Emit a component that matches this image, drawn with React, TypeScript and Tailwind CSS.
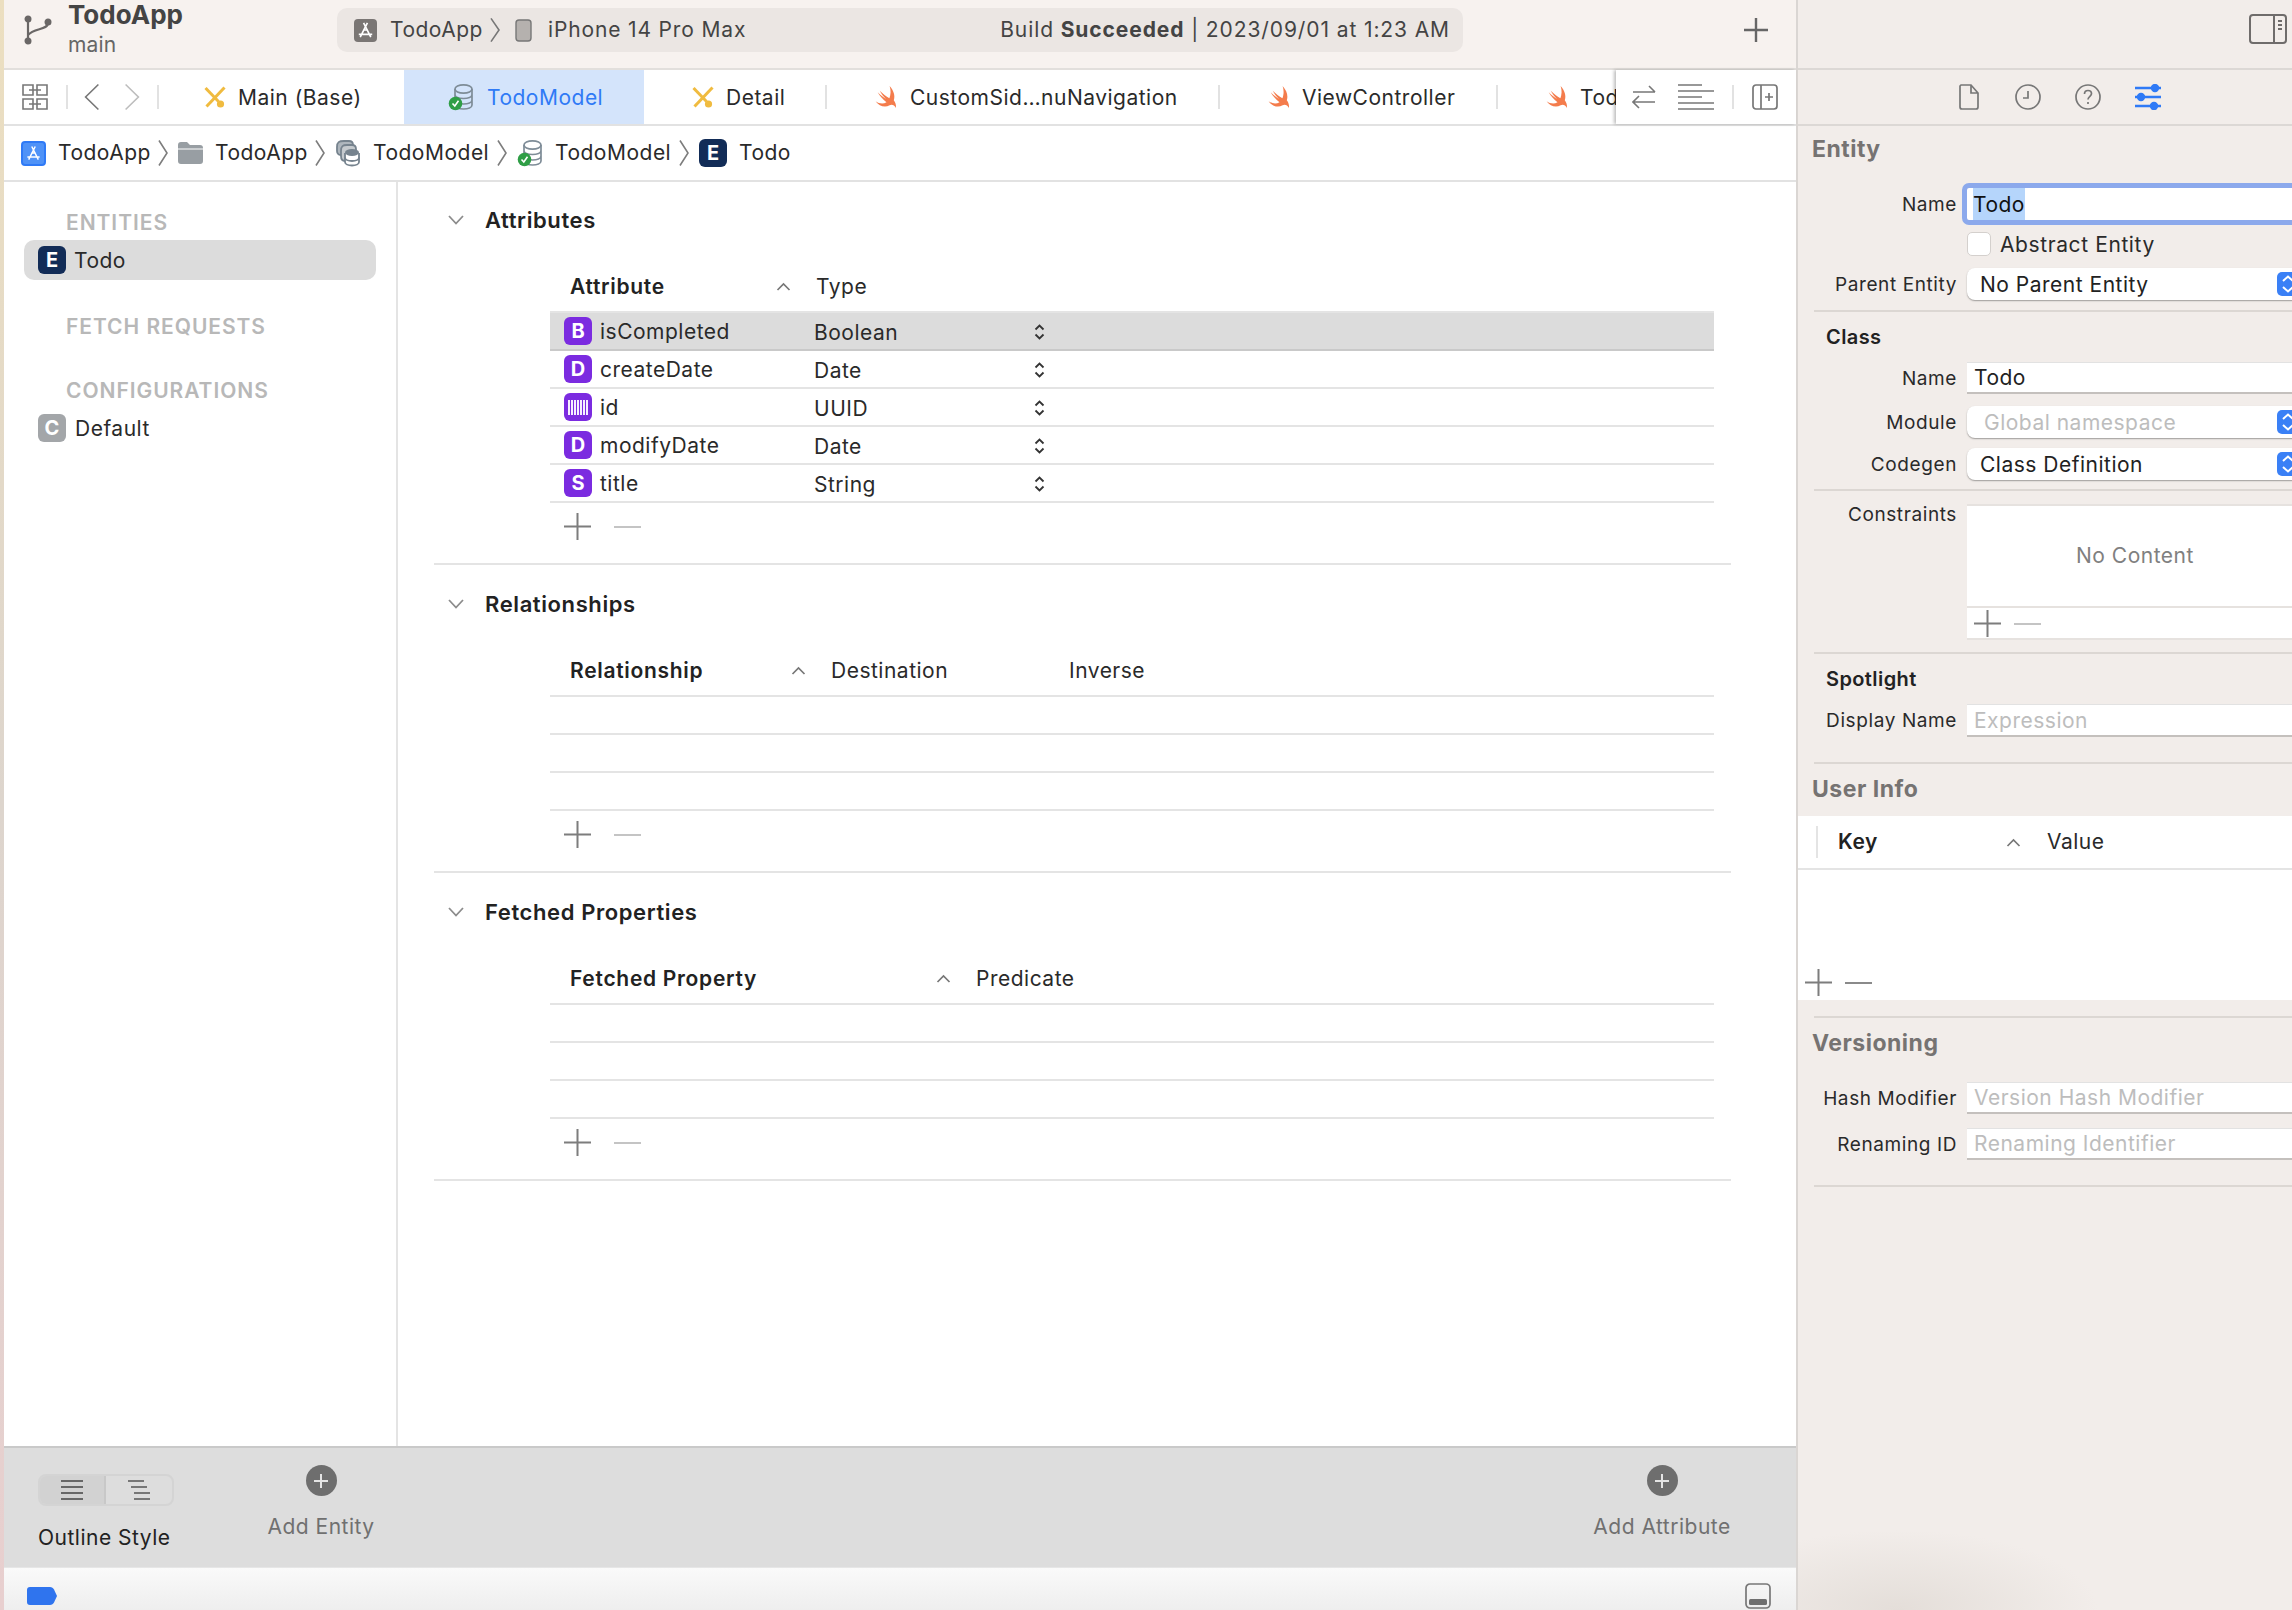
import type { ReactNode } from "react";

const LINE = "border-[#e4e4e4]";

function Chevron({ dir = "right", className = "" }: { dir?: "left" | "right"; className?: string }) {
  return (
    <svg viewBox="0 0 10 28" preserveAspectRatio="none" fill="none" className={className} stroke="currentColor" strokeWidth="1.6">
      <path vectorEffect="non-scaling-stroke" d={dir === "right" ? "M1 1.5 L9 14 L1 26.5" : "M9 1.5 L1 14 L9 26.5"} />
    </svg>
  );
}

function SortUp({ className = "" }: { className?: string }) {
  return (
    <svg viewBox="0 0 15 9" fill="none" stroke="#777" strokeWidth="1.7" className={`h-[9px] w-[15px] shrink-0 ${className}`}>
      <path d="M1.5 8 L7.5 2 L13.5 8" />
    </svg>
  );
}

function Stepper({ className = "" }: { className?: string }) {
  return (
    <svg viewBox="0 0 11 16" fill="none" stroke="#333" strokeWidth="1.8" className={`h-[16px] w-[11px] ${className}`}>
      <path d="M1.5 5.5 L5.5 1.5 L9.5 5.5 M1.5 10.5 L5.5 14.5 L9.5 10.5" />
    </svg>
  );
}

function PlusMinus({ dark = false, gap = "gap-[23px]" }: { dark?: boolean; gap?: string }) {
  return (
    <div className={`flex items-center ${gap}`}>
      <svg viewBox="0 0 27 27" stroke="#7d7d7d" strokeWidth="2" className="h-[27px] w-[27px]">
        <path d="M13.5 0 V27 M0 13.5 H27" />
      </svg>
      <div className={`h-[2px] w-[27px] ${dark ? "bg-[#8a8a8a]" : "bg-[#c4c4c4]"}`} />
    </div>
  );
}

function BranchIcon() {
  return (
    <svg viewBox="0 0 28 30" fill="none" stroke="#6a6766" strokeWidth="2.2" className="h-[30px] w-[28px]">
      <circle cx="4" cy="4" r="2.4" fill="#6a6766" />
      <circle cx="4" cy="26" r="2.4" fill="#6a6766" />
      <circle cx="24" cy="7" r="2.4" fill="#6a6766" />
      <path d="M4 5 V25 M24 8 C24 15 10 13 4 20" />
    </svg>
  );
}

function AppGlyph({ color = "#fff" }: { color?: string }) {
  return (
    <svg viewBox="0 0 24 24" fill="none" stroke={color} strokeWidth="1.7" className="h-full w-full">
      <path d="M14 4 L6.5 19 M10 4 L17.5 19 M5 16 H19 M9.5 11.5 H14.5" />
    </svg>
  );
}

function DbCheck({ className = "" }: { className?: string }) {
  return (
    <svg viewBox="0 0 26 28" fill="none" className={className}>
      <g stroke="#7e8c97" strokeWidth="1.7">
        <ellipse cx="15.5" cy="6" rx="8.5" ry="4.2" />
        <path d="M7 6 V22 C7 24.5 11 26 15.5 26 C20 26 24 24.5 24 22 V6 M7 11.5 C7 14 11 15.5 15.5 15.5 C20 15.5 24 14 24 11.5 M7 17 C7 19.5 11 21 15.5 21 C20 21 24 19.5 24 17" />
      </g>
      <circle cx="7.5" cy="20.5" r="6.8" fill="#2f9e46" />
      <path d="M4.5 20.5 L6.8 23 L10.5 17.8" stroke="#fff" strokeWidth="1.6" />
    </svg>
  );
}

function ModelStack() {
  return (
    <svg viewBox="0 0 26 28" fill="none" className="h-[28px] w-[26px]">
      <g stroke="#76838e" strokeWidth="1.8">
        <path d="M2 8 C2 3 4 2 9 2 H14 C17 2 18 3 18 6 V16 H6 C3 16 2 14 2 12 Z" fill="#aeb6bd" />
        <path d="M6 12 C6 7 8 6 12 6 H17 C20 6 21 7 21 10 V22 H10 C7 22 6 20 6 17 Z" fill="#c5cace" />
      </g>
      <path d="M10 14 V23 C10 25 13 26.5 17 26.5 C21 26.5 24 25 24 23 V14" fill="#fff" stroke="#76838e" strokeWidth="1.8" />
      <ellipse cx="17" cy="13.5" rx="7" ry="3.4" fill="#76838e" />
      <path d="M10 18.5 C10 20.5 13 22 17 22 C21 22 24 20.5 24 18.5" stroke="#76838e" strokeWidth="1.8" />
    </svg>
  );
}

function FolderIcon() {
  return (
    <svg viewBox="0 0 25 22" className="h-[22px] w-[25px]" fill="#989ea3">
      <path d="M0 3 C0 1 1 0 3 0 H9 L12 3 H22 C24 3 25 4 25 6 V19 C25 21 24 22 22 22 H3 C1 22 0 21 0 19 Z" />
      <path d="M0 7 H25" stroke="#fff" strokeWidth="1" />
    </svg>
  );
}

function StoryboardIcon() {
  return (
    <svg viewBox="0 0 22 22" fill="none" className="h-[22px] w-[22px]" stroke="#f0bb3f">
      <path d="M20.5 1.5 L2.5 20.5" strokeWidth="3" />
      <path d="M1.5 2 L14.5 15.5" strokeWidth="3" />
      <circle cx="16.5" cy="18" r="3.6" fill="#f0bb3f" stroke="none" />
    </svg>
  );
}

function SwiftIcon() {
  return (
    <svg viewBox="0 0 24 24" className="h-[26px] w-[25px]" fill="#f47c4c">
      <path d="M15 1.5 C19 6 20.5 11 19 15 C20.5 17 21.5 19.5 21 22.5 C19.5 19.5 17 19 15 20 C10.5 22.5 5 21 1.5 16 C5 18.5 9 18.8 12 17 C8.5 14.5 5.5 11 3.5 7.5 C6.5 10.5 9.5 12.5 11.5 13.8 C9 11.5 6.8 8.5 5.5 6 C8.5 9 12.5 12 14.8 13.2 C16 10 16.5 6 15 1.5 Z" />
    </svg>
  );
}

function Badge({ letter, bg = "bg-[#7b2be0]" }: { letter?: string; bg?: string }) {
  return (
    <div className={`flex h-[28px] w-[28px] shrink-0 items-center justify-center rounded-[6px] text-[20px] font-bold tracking-normal text-white ${bg}`}>
      {letter ?? (
        <svg viewBox="0 0 20 15" className="h-[15px] w-[20px]" fill="#f6efff" shapeRendering="crispEdges">
          {[1, 4, 7, 10, 13, 16, 19].map((x) => (
            <rect key={x} x={x - 1} y="0" width="2" height="15" />
          ))}
        </svg>
      )}
    </div>
  );
}

function Sep() {
  return <div className="h-[24px] w-[2px] shrink-0 bg-[#e2e2e2]" />;
}

function Tab({
  icon,
  label,
  width,
  pad,
  gap = "ml-[13px]",
  active,
}: {
  icon: ReactNode;
  label: string;
  width: string;
  pad: string;
  gap?: string;
  active?: boolean;
}) {
  return (
    <div className={`flex h-full shrink-0 items-center ${width} ${pad} ${active ? "bg-[#d4e4fb] text-[#2f7af6]" : ""}`}>
      {icon}
      <span className={`whitespace-nowrap pt-[1px] ${gap}`}>{label}</span>
    </div>
  );
}

function Crumb({ icon, label, width, last }: { icon: ReactNode; label: string; width: string; last?: boolean }) {
  return (
    <>
      {icon}
      <span className={`ml-[12px] whitespace-nowrap ${width}`}>{label}</span>
      {!last && <Chevron className="mr-[10px] h-[28px] w-[10px] text-[#7d7d7d]" />}
    </>
  );
}

type Col = { label: string; width: string };

function Section({
  title,
  first,
  sortWidth,
  cols,
  top = "pt-[18px]",
  children,
}: {
  title: string;
  first: string;
  sortWidth: string;
  cols: Col[];
  top?: string;
  children: ReactNode;
}) {
  return (
    <section className={top}>
      <div className="ml-[50px] flex h-[40px] items-center">
        <svg viewBox="0 0 16 10" fill="none" stroke="#8c8c8c" strokeWidth="1.8" className="h-[10px] w-[16px]">
          <path d="M1 1 L8 8.5 L15 1" />
        </svg>
        <h2 className="ml-[21px] text-[22px] font-semibold tracking-[0.6px] text-[#222]">{title}</h2>
      </div>
      <div className="ml-[152px] w-[1164px]">
        <div className={`flex h-[73px] items-center border-b-2 pl-[20px] pt-[22px] ${LINE}`}>
          <span className={`font-semibold tracking-[0.7px] text-[#222] ${sortWidth}`}>{first}</span>
          <SortUp className="mr-[25px]" />
          {cols.map((c) => (
            <span key={c.label} className={`text-[#2a2a2a] ${c.width}`}>
              {c.label}
            </span>
          ))}
        </div>
        {children}
        <div className="ml-[14px] pt-[10px]">
          <PlusMinus />
        </div>
      </div>
      <div className={`ml-[36px] mt-[23px] h-0 w-[1297px] border-b-2 ${LINE}`} />
    </section>
  );
}

const attributes = [
  { badge: "B", name: "isCompleted", type: "Boolean" },
  { badge: "D", name: "createDate", type: "Date" },
  { badge: undefined, name: "id", type: "UUID" },
  { badge: "D", name: "modifyDate", type: "Date" },
  { badge: "S", name: "title", type: "String" },
];

function EmptyRows() {
  return (
    <>
      {[0, 1, 2].map((i) => (
        <div key={i} className={`h-[38px] border-b-2 ${LINE}`} />
      ))}
    </>
  );
}

function FieldRow({
  label,
  children,
  className = "",
  labelClass = "pt-[2px]",
}: {
  label: string;
  children: ReactNode;
  className?: string;
  labelClass?: string;
}) {
  return (
    <div className={`flex ${className}`}>
      <div className={`w-[159px] shrink-0 whitespace-nowrap text-right text-[19px] tracking-[0.6px] text-[#2a2a2a] ${labelClass}`}>{label}</div>
      <div className="ml-[10px] w-[340px] shrink-0">{children}</div>
    </div>
  );
}

function TextField({ value, placeholder, h = "h-[32px]" }: { value?: string; placeholder?: string; h?: string }) {
  return (
    <div
      className={`flex items-center border-t border-t-[#e2e2e2] border-b-2 border-b-[#c4c0bd] bg-white pl-[7px] pt-[1px] ${h} ${
        value ? "text-[#222]" : "text-[#bdbdbd]"
      }`}
    >
      {value ?? placeholder}
    </div>
  );
}

function SelectField({ value, muted }: { value: string; muted?: boolean }) {
  return (
    <div className="flex h-[32px] items-center rounded-[8px] bg-white pl-[13px] pr-[6px] shadow-[0_1px_1.5px_rgba(0,0,0,0.35)]">
      <span className={`flex-1 pt-[2px] ${muted ? "pl-[4px] text-[#bdbdbd]" : "text-[#222]"}`}>{value}</span>
      <svg viewBox="0 0 24 24" className="h-[24px] w-[24px] rounded-[5px] bg-[#3a80f6]" fill="none" stroke="#fff" strokeWidth="2">
        <path d="M6 9 L11 4.5 L16 9 M6 15 L11 19.5 L16 15" />
      </svg>
    </div>
  );
}

function Divider({ className = "" }: { className?: string }) {
  return <div className={`ml-[16px] h-[2px] bg-[#dcd7d3] ${className}`} />;
}

function Heading({ children, className = "h-[50px]" }: { children: ReactNode; className?: string }) {
  return <div className={`ml-[14px] flex items-center text-[23px] font-bold tracking-[0.5px] text-[#767372] ${className}`}>{children}</div>;
}

function SubHeading({ children }: { children: ReactNode }) {
  return <div className="ml-[28px] flex h-[50px] items-center text-[20px] font-semibold tracking-[0.4px] text-[#222]">{children}</div>;
}

function Inspector() {
  return (
    <aside className="relative h-full flex-1 overflow-hidden bg-[#f2edea] bg-[radial-gradient(ellipse_200px_80px_at_100px_100%,#e4ded9,transparent)]">
      <div className="flex h-[70px] items-start justify-end border-b-2 border-[#dcd8d5] pr-[5px] pt-[14px]">
        <svg viewBox="0 0 38 30" fill="none" stroke="#6f6c6b" strokeWidth="2" className="h-[30px] w-[38px]">
          <rect x="1" y="1" width="36" height="28" rx="3" />
          <path d="M25 1 V29 M29 7 H33 M29 11 H33 M29 15 H33" />
        </svg>
      </div>
      <div className="flex h-[56px] items-center border-b-2 border-[#dcd8d5] pl-[161px]">
        <svg viewBox="0 0 20 26" fill="none" stroke="#777" strokeWidth="1.7" className="h-[26px] w-[20px]">
          <path d="M2 1 H12 L19 9 V23 C19 24.5 18 25 17 25 H3 C2 25 1 24.5 1 23 V2 Z M12 1 V9 H19" />
        </svg>
        <svg viewBox="0 0 26 26" fill="none" stroke="#777" strokeWidth="1.7" className="ml-[36px] h-[26px] w-[26px]">
          <circle cx="13" cy="13" r="12" />
          <path d="M13 7 V14 H8" />
        </svg>
        <svg viewBox="0 0 26 26" fill="none" stroke="#777" strokeWidth="1.7" className="ml-[34px] h-[26px] w-[26px]">
          <circle cx="13" cy="13" r="12" />
          <path d="M9.5 10 C9.5 7.5 11 6.5 13 6.5 C15.2 6.5 16.5 8 16.5 9.8 C16.5 12.2 13 12.5 13 15.5 M13 18 V20" />
        </svg>
        <svg viewBox="0 0 26 26" fill="none" stroke="#2f7af6" strokeWidth="2.4" className="ml-[34px] h-[26px] w-[26px]">
          <path d="M0 4 H26 M0 13 H26 M0 22 H26" />
          <circle cx="20" cy="4" r="3" fill="#2f7af6" />
          <circle cx="6" cy="13" r="3" fill="#2f7af6" />
          <circle cx="19" cy="22" r="3" fill="#2f7af6" />
        </svg>
      </div>

      <Heading className="h-[46px]">Entity</Heading>
      <FieldRow label="Name" className="mt-[16px] h-[32px] items-center">
        <div className="flex h-[32px] items-center rounded-[2px] bg-white pl-[6px] text-[#111] outline-[5px] outline-[#8ca9ec]">
          <span className="bg-[#b5d5fb] pt-[1px]">Todo</span>
        </div>
      </FieldRow>
      <div className="ml-[169px] mt-[12px] flex h-[24px] items-center">
        <div className="h-[24px] w-[24px] rounded-[5px] border border-[#d4d0cd] bg-white" />
        <span className="ml-[9px] pt-[1px] tracking-[0.6px] text-[#2a2a2a]">Abstract Entity</span>
      </div>
      <FieldRow label="Parent Entity" className="mt-[12px] h-[32px] items-center">
        <SelectField value="No Parent Entity" />
      </FieldRow>
      <Divider className="mt-[10px]" />

      <SubHeading>Class</SubHeading>
      <FieldRow label="Name" className="h-[32px] items-center">
        <TextField value="Todo" />
      </FieldRow>
      <FieldRow label="Module" className="mt-[12px] h-[32px] items-center">
        <SelectField value="Global namespace" muted />
      </FieldRow>
      <FieldRow label="Codegen" className="mt-[10px] h-[32px] items-center">
        <SelectField value="Class Definition" />
      </FieldRow>
      <Divider className="mt-[9px]" />

      <FieldRow label="Constraints" className="mt-[13px] items-start" labelClass="leading-[22px]">
        <div className="h-[136px] border-t-2 border-b-2 border-[#e6e2df] bg-white">
          <div className="flex h-[102px] items-center border-b-2 border-[#e6e2df] pl-[109px] text-[#808080]">No Content</div>
          <div className="pl-[7px] pt-[2px]">
            <PlusMinus gap="gap-[13px]" />
          </div>
        </div>
      </FieldRow>
      <Divider className="mt-[12px]" />

      <SubHeading>Spotlight</SubHeading>
      <FieldRow label="Display Name" className="h-[33px] items-center">
        <TextField placeholder="Expression" h="h-[33px]" />
      </FieldRow>
      <Divider className="mt-[25px]" />

      <Heading className="h-[52px] pb-[2px]">User Info</Heading>
      <div className="flex h-[184px] flex-col bg-white">
        <div className="flex h-[54px] shrink-0 items-center border-b-2 border-[#e4e4e4] pl-[18px]">
          <div className="h-[32px] w-[2px] bg-[#e4e4e4]" />
          <span className="ml-[20px] w-[168px] font-semibold text-[#222]">Key</span>
          <SortUp />
          <span className="ml-[26px] text-[#2a2a2a]">Value</span>
        </div>
        <div className="mt-auto pb-[4px] pl-[7px]">
          <PlusMinus dark gap="gap-[13px]" />
        </div>
      </div>
      <Divider className="mt-[16px]" />

      <Heading>Versioning</Heading>
      <FieldRow label="Hash Modifier" className="mt-[14px] h-[32px] items-center">
        <TextField placeholder="Version Hash Modifier" />
      </FieldRow>
      <FieldRow label="Renaming ID" className="mt-[14px] h-[32px] items-center">
        <TextField placeholder="Renaming Identifier" />
      </FieldRow>
      <Divider className="mt-[25px]" />
    </aside>
  );
}

function BarAction({ label, className = "" }: { label: string; className?: string }) {
  return (
    <div className={`flex w-[160px] flex-col items-center pt-[17px] ${className}`}>
      <div className="flex h-[31px] w-[31px] items-center justify-center rounded-full bg-[#6e6e6e]">
        <svg viewBox="0 0 16 16" stroke="#e4e4e4" strokeWidth="2" className="h-[16px] w-[16px]">
          <path d="M8 1 V15 M1 8 H15" />
        </svg>
      </div>
      <span className="mt-[15px] whitespace-nowrap text-[#707070]">{label}</span>
    </div>
  );
}

export default function App() {
  return (
    <div className="flex h-[1610px] w-[2292px] overflow-hidden bg-white font-['Inter',sans-serif] text-[21px] tracking-[0.5px] text-[#2a2a2a]">
      <div className="h-full w-[4px] shrink-0 bg-gradient-to-b from-[#ecdfc0] via-[#ddd5cd] to-[#e8cfcf]" />

      <div className="flex h-full w-[1794px] shrink-0 flex-col border-r-2 border-[#dad6d3]">
        {/* barre du haut */}
        <header className="flex h-[70px] shrink-0 items-center border-b-2 border-[#e2dfdc] bg-[#f7f2ef] pb-[8px]">
          <div className="ml-[20px]">
            <BranchIcon />
          </div>
          <div className="ml-[16px] -mt-[4px] flex w-[269px] flex-col leading-none">
            <span className="text-[26px] font-bold tracking-normal text-[#444]">TodoApp</span>
            <span className="mt-[6px] text-[21px] tracking-[0.2px] text-[#666]">main</span>
          </div>
          <div className="flex h-[44px] w-[1126px] items-center rounded-[10px] bg-[#ebe6e3] pl-[17px] pr-[13px] text-[#444]">
            <div className="h-[23px] w-[23px] rounded-[4px] bg-[#7a7674]">
              <AppGlyph />
            </div>
            <span className="ml-[13px] w-[100px]">TodoApp</span>
            <Chevron className="h-[26px] w-[10px] text-[#777]" />
            <svg viewBox="0 0 17 23" fill="#b5b1ae" stroke="#777" strokeWidth="1.4" className="ml-[15px] h-[23px] w-[17px]">
              <rect x="1" y="1" width="15" height="21" rx="3" />
            </svg>
            <span className="ml-[16px] tracking-[0.85px]">iPhone 14 Pro Max</span>
            <span className="ml-auto tracking-[0.9px]">
              Build <b className="font-bold">Succeeded</b> | 2023/09/01 at 1:23 AM
            </span>
          </div>
          <svg viewBox="0 0 24 24" stroke="#666" strokeWidth="2.4" className="ml-[281px] h-[24px] w-[24px]">
            <path d="M12 0 V24 M0 12 H24" />
          </svg>
        </header>

        {/* onglets */}
        <nav className="flex h-[56px] shrink-0 items-center border-b-2 border-[#e2e2e2]">
          <svg viewBox="0 0 26 26" fill="none" stroke="#777" strokeWidth="1.6" className="ml-[18px] h-[26px] w-[26px] shrink-0">
            <path d="M1 1 H11 V11 H1 Z M15 1 H25 V11 H15 Z M1 15 H11 V25 H1 Z M15 15 H25 V25 H15 Z M7 6 H19 M7 20 H19" />
          </svg>
          <div className="ml-[18px] shrink-0">
            <Sep />
          </div>
          <Chevron dir="left" className="ml-[16px] h-[28px] w-[16px] shrink-0 text-[#777]" />
          <Chevron className="ml-[24px] h-[28px] w-[16px] shrink-0 text-[#bdbdbd]" />
          <div className="ml-[17px] shrink-0">
            <Sep />
          </div>
          <div className="flex h-full min-w-0 flex-1 items-center overflow-hidden">
            <Tab icon={<StoryboardIcon />} label="Main (Base)" width="w-[245px]" pad="pl-[45px]" gap="ml-[12px]" />
            <Tab icon={<DbCheck className="h-[28px] w-[26px]" />} label="TodoModel" width="w-[240px]" pad="pl-[44px]" active />
            <Tab icon={<StoryboardIcon />} label="Detail" width="w-[181px]" pad="pl-[48px]" gap="ml-[12px]" />
            <Sep />
            <Tab icon={<SwiftIcon />} label="CustomSid…nuNavigation" width="w-[391px]" pad="pl-[47px]" gap="ml-[11px]" />
            <Sep />
            <Tab icon={<SwiftIcon />} label="ViewController" width="w-[276px]" pad="pl-[47px]" gap="ml-[10px]" />
            <Sep />
            <Tab icon={<SwiftIcon />} label="TodoItem" width="w-[200px]" pad="pl-[47px]" gap="ml-[10px]" />
          </div>
          <div className="relative flex h-full w-[180px] shrink-0 items-center bg-white pl-[16px] shadow-[-2px_0_3px_rgba(0,0,0,0.25)]">
            <svg viewBox="0 0 24 26" fill="none" stroke="#777" strokeWidth="1.6" className="h-[26px] w-[24px]">
              <path d="M1 8 H23 M17 2 L23 8 M23 18 H1 M7 12 L1 18 L7 24" />
            </svg>
            <svg viewBox="0 0 36 26" fill="none" stroke="#777" strokeWidth="1.7" className="ml-[22px] h-[26px] w-[36px]">
              <path d="M0 1 H24 M0 7 H36 M0 13 H24 M0 19 H36 M0 25 H36" />
            </svg>
            <div className="ml-[18px]">
              <Sep />
            </div>
            <svg viewBox="0 0 26 26" fill="none" stroke="#777" strokeWidth="1.7" className="ml-[18px] h-[26px] w-[26px]">
              <rect x="1" y="1" width="24" height="24" rx="3" />
              <path d="M9 1 V25 M17 9 V17 M13 13 H21" />
            </svg>
          </div>
        </nav>

        {/* fil d'ariane */}
        <div className="flex h-[56px] shrink-0 items-center border-b-2 border-[#e2e2e2] pl-[17px]">
          <Crumb
            icon={
              <div className="h-[25px] w-[25px] shrink-0 rounded-[4px] border-2 border-[#2f7af6] bg-[#4f92f7]">
                <AppGlyph />
              </div>
            }
            label="TodoApp"
            width="w-[100px]"
          />
          <Crumb icon={<FolderIcon />} label="TodoApp" width="w-[100px]" />
          <Crumb icon={<ModelStack />} label="TodoModel" width="w-[124px]" />
          <Crumb icon={<DbCheck className="h-[28px] w-[26px]" />} label="TodoModel" width="w-[124px]" />
          <Crumb icon={<Badge letter="E" bg="bg-[#122c57]" />} label="Todo" width="" last />
        </div>

        <div className="flex min-h-0 flex-1">
          {/* entités */}
          <div className="w-[394px] shrink-0 border-r-2 border-[#e4e4e4]">
            <div className="ml-[62px] mt-[28px] flex h-[24px] items-center pt-[2px] font-semibold tracking-[0.95px] text-[#b8b8b8]">ENTITIES</div>
            <div className="ml-[20px] mt-[6px] flex h-[40px] w-[352px] items-center rounded-[10px] bg-[#dcdcdc] pl-[14px]">
              <Badge letter="E" bg="bg-[#122c57]" />
              <span className="ml-[8px] pt-[1px]">Todo</span>
            </div>
            <div className="ml-[62px] mt-[34px] flex h-[24px] items-center pt-[2px] font-semibold tracking-[0.95px] text-[#b8b8b8]">FETCH REQUESTS</div>
            <div className="ml-[62px] mt-[40px] flex h-[24px] items-center pt-[2px] font-semibold tracking-[0.95px] text-[#b8b8b8]">CONFIGURATIONS</div>
            <div className="ml-[34px] mt-[12px] flex h-[28px] items-center">
              <Badge letter="C" bg="bg-[#a3a6a9]" />
              <span className="ml-[9px] pt-[1px]">Default</span>
            </div>
          </div>

          {/* tableaux */}
          <main className="min-w-0 flex-1">
            <Section title="Attributes" first="Attribute" sortWidth="w-[206px]" cols={[{ label: "Type", width: "" }]}>
              {attributes.map((a, i) => (
                <div
                  key={a.name}
                  className={`flex h-[38px] items-center border-b-2 pl-[14px] ${
                    i === 0 ? "border-[#c9c9c9] bg-[#dcdcdc]" : LINE
                  }`}
                >
                  <Badge letter={a.badge} />
                  <span className="ml-[8px] w-[214px] pt-[1px]">{a.name}</span>
                  <span className="w-[220px] pt-[3px]">{a.type}</span>
                  <Stepper className="mt-[2px]" />
                </div>
              ))}
            </Section>
            <Section
              title="Relationships"
              first="Relationship"
              sortWidth="w-[221px]"
              top="pt-[19px]"
              cols={[
                { label: "Destination", width: "w-[238px]" },
                { label: "Inverse", width: "" },
              ]}
            >
              <EmptyRows />
            </Section>
            <Section
              title="Fetched Properties"
              first="Fetched Property"
              sortWidth="w-[366px]"
              top="pt-[19px]"
              cols={[{ label: "Predicate", width: "" }]}
            >
              <EmptyRows />
            </Section>
          </main>
        </div>

        {/* barre du bas */}
        <div className="flex h-[121px] shrink-0 border-t-2 border-[#c9c9c9] bg-[#dddddd] pb-[2px]">
          <div className="ml-[34px] w-[136px] pt-[26px]">
            <div className="flex h-[32px] overflow-hidden rounded-[8px] border-2 border-[#d4d4d4]">
              <div className="flex w-[66px] items-center justify-center border-r-2 border-[#c8c8c8] bg-[#d2d2d2]">
                <svg viewBox="0 0 22 20" stroke="#444" strokeWidth="1.6" className="h-[20px] w-[22px]">
                  <path d="M0 1 H22 M0 7 H22 M0 13 H22 M0 19 H22" />
                </svg>
              </div>
              <div className="flex flex-1 items-center justify-center">
                <svg viewBox="0 0 22 20" stroke="#555" strokeWidth="1.6" className="h-[20px] w-[22px]">
                  <path d="M0 1 H16 M3 7 H19 M6 13 H22 M6 19 H22" />
                </svg>
              </div>
            </div>
            <div className="mt-[16px] whitespace-nowrap text-[#222]">Outline Style</div>
          </div>
          <BarAction label="Add Entity" className="ml-[67px]" />
          <BarAction label="Add Attribute" className="ml-auto mr-[54px]" />
        </div>

        {/* barre d'état */}
        <footer className="flex h-[43px] shrink-0 items-center justify-between border-t border-[#e6e6e6] bg-gradient-to-b from-[#fafafa] to-[#eeeeee] pl-[23px] pr-[25px]">
          <svg viewBox="0 0 30 18" className="mt-[14px] h-[18px] w-[30px]" fill="#2f74ee">
            <path d="M3 0 H23 C25 0 26 1 27 2.5 L30 9 L27 15.5 C26 17 25 18 23 18 H3 C1 18 0 17 0 15 V3 C0 1 1 0 3 0 Z" />
          </svg>
          <svg viewBox="0 0 26 26" fill="none" className="mt-[13px] h-[26px] w-[26px]">
            <rect x="1" y="1" width="24" height="24" rx="4" stroke="#777" strokeWidth="1.7" />
            <rect x="4" y="16" width="18" height="6" rx="1.5" fill="#6f6f6f" />
          </svg>
        </footer>
      </div>

      <Inspector />
    </div>
  );
}
